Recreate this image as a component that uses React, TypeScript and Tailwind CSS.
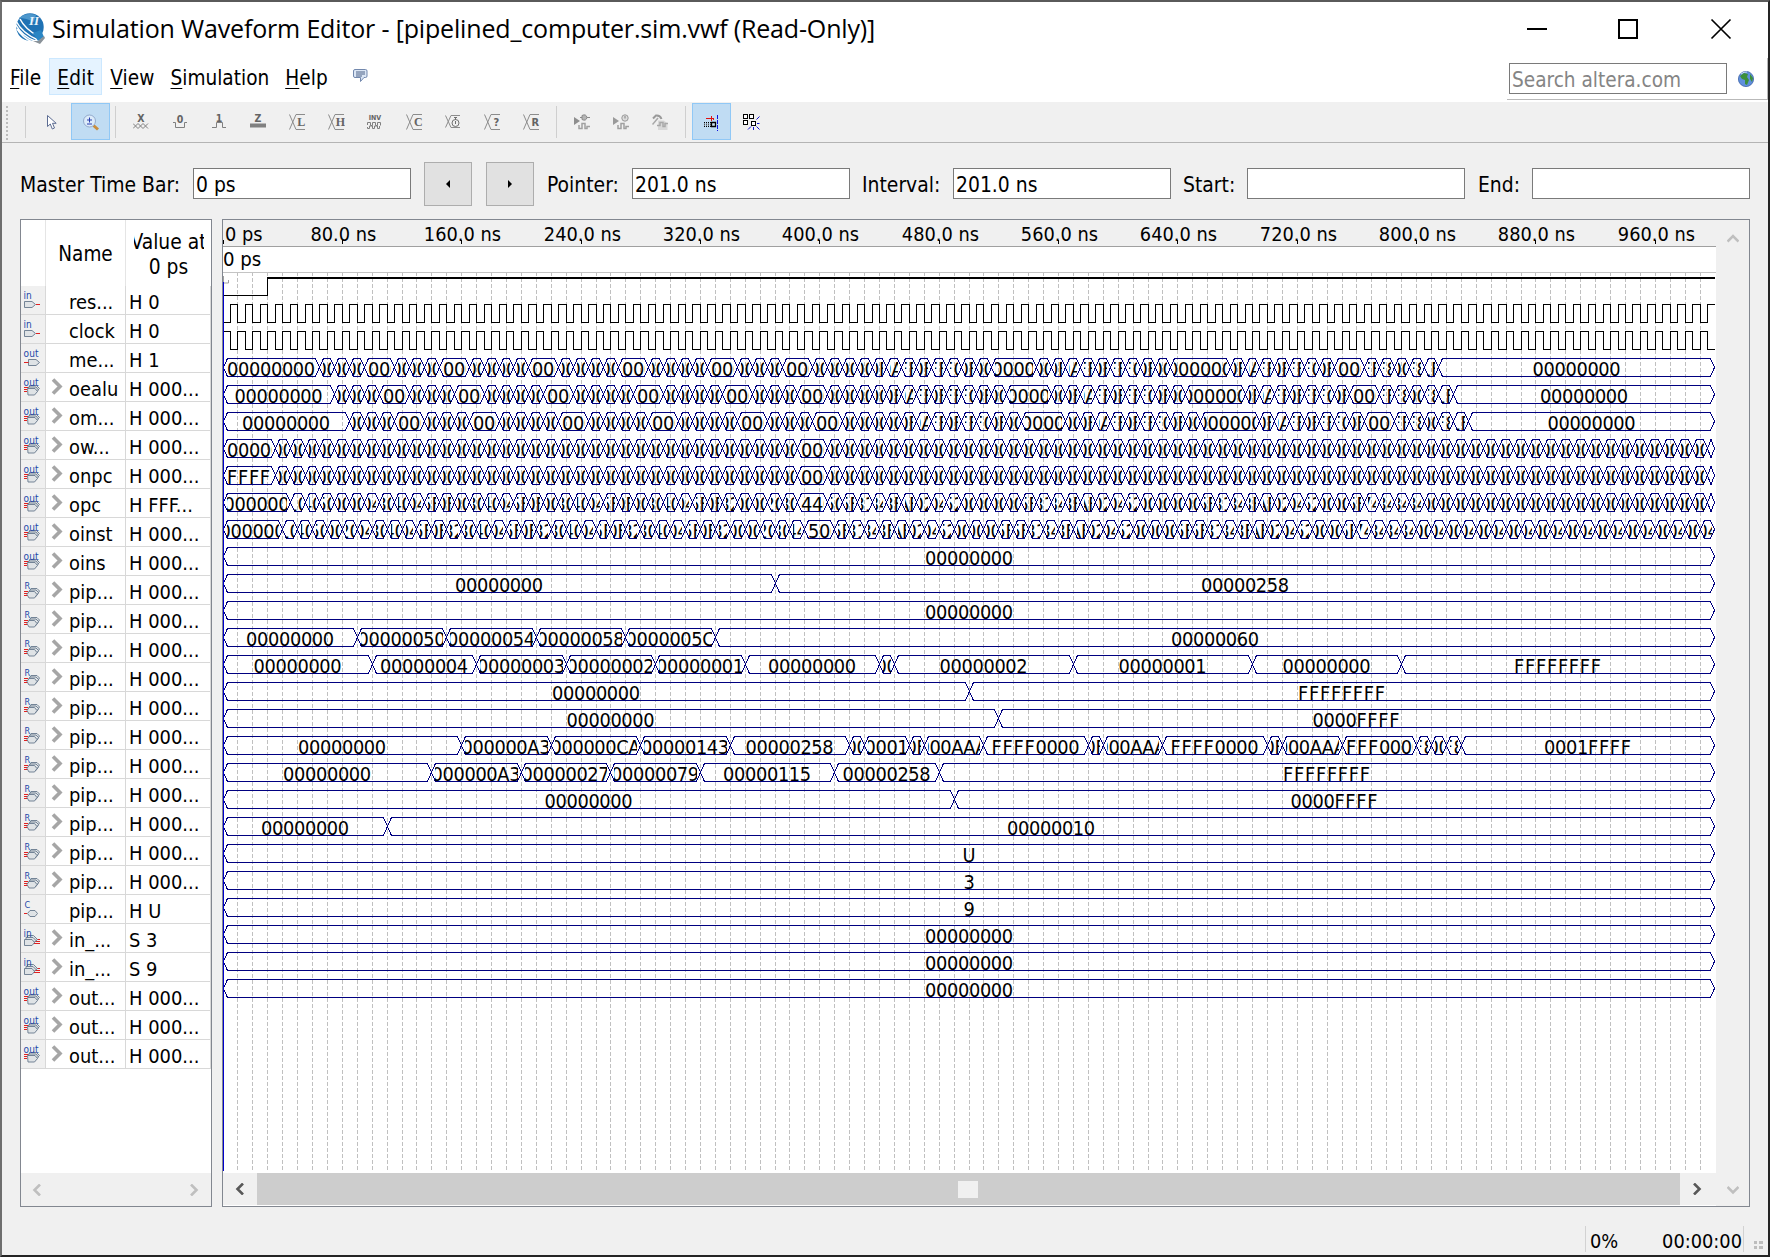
import React from "react";

const UI = "font-['DejaVu_Sans_Condensed','DejaVu_Sans',sans-serif] [font-stretch:condensed]";

/* ---------- waveform data ---------- */

type Seg = { from: number; to: number; text: string };

const END = 1000;
const PX_PER_NS = 1.492;
const toX = (t: number) => Math.floor(t * PX_PER_NS);

function segs(breaks: number[], texts: string[]): Seg[] {
  const edges = [0, ...breaks, END];
  return texts.map((text, i) => ({ from: edges[i], to: edges[i + 1], text }));
}

function range(from: number, to: number, skip: number[] = []) {
  const out: number[] = [];
  for (let t = from; t <= to; t += 10) if (!skip.includes(t)) out.push(t);
  return out;
}

const ZERO = "00000000";
const LOOP_CODES: Record<number, string> = {
  440: "0000FFFF", 450: "0000AAAA", 460: "FFFFFFFF", 470: "0000FFFF", 480: "FFFFFFFF", 490: "FFFF0000", 500: "0000FFFF",
  560: "0000FFFF", 570: "0000AAAA", 580: "FFFFFFFF", 590: "0000FFFF", 600: "FFFFFFFF", 610: "FFFF0000", 620: "0000FFFF",
  680: "0000FFFF", 690: "0000AAAA", 700: "FFFFFFFF", 710: "0000FFFF", 720: "FFFFFFFF", 730: "FFFF0000", 740: "0000FFFF",
  770: "FFFFFFFF", 780: "FFFF8000", 800: "FFFF8000", 810: "0001FFFF",
};

function stageRow(shift: number): Seg[] {
  const breaks = range(65, 815, [105, 155, 215, 275, 335, 385, 525, 535, 645, 655, 665, 755]);
  const edges = [0, ...breaks.map((b) => b + shift), END];
  return edges.slice(0, -1).map((from, i) => {
    const to = edges[i + 1];
    const mid = (from + to) / 2 - shift;
    return { from, to, text: to - from === 10 ? LOOP_CODES[mid] ?? ZERO : ZERO };
  });
}

function pairRow(breaks: number[], first: string, codes: string): Seg[] {
  const list = codes.split(" ");
  const edges = [0, ...breaks, END];
  return edges.slice(0, -1).map((from, i) => ({
    from,
    to: edges[i + 1],
    text: i === 0 ? first : "000" + (list[i - 1] ?? "00") + "000",
  }));
}

const PC_CODES =
  "10 40 50 00 00 04 30 40 04 5F 0F 00 30 40 04 5F 0F 00 30 40 04 5F 0F 00 30 40 04 5F 0F 32 00 00 20 30 44 50 5F 31 34 3F AF 02 04 52 00 00 00 00 5F 31 34 3F AF 02 04 52 00 00 00 00 5F 31 34 3F AF 02 04 52 00 00 5F 74 34 34 34";
const INST_CODES =
  "10 40 50 00 20 04 30 40 04 5F 0F 32 30 40 04 5F 0F 32 30 40 04 5F 0F 32 30 40 04 5F 0F 32 00 00 20 30 44 50 5F 31 34 3F AF 02 04 52 00 00 00 5F 5F 31 34 3F AF 02 04 52 00 00 00 5F 5F 31 34 3F AF 02 04 52 00 00 5F 74 34 34 34" +
  " 00 04".repeat(10);

const BUSES: Seg[][] = [
  stageRow(0),
  stageRow(10),
  stageRow(20),
  pairRow(range(35, 995, [395]), ZERO, "00"),
  pairRow(range(35, 995, [395]), "FFFFFFFF", "00"),
  pairRow(range(45, 995, [395]), ZERO, PC_CODES),
  pairRow(range(40, 990, [400]), ZERO, INST_CODES),
  segs([], [ZERO]),
  segs([370], [ZERO, "00000258"]),
  segs([], [ZERO]),
  segs([90, 150, 210, 270, 330], [ZERO, "00000050", "00000054", "00000058", "0000005C", "00000060"]),
  segs(
    [100, 170, 230, 290, 350, 440, 450, 570, 690, 790],
    [ZERO, "00000004", "00000003", "00000002", "00000001", ZERO, ZERO, "00000002", "00000001", ZERO, "FFFFFFFF"],
  ),
  segs([500], [ZERO, "FFFFFFFF"]),
  segs([520], [ZERO, "0000FFFF"]),
  segs(
    [160, 220, 280, 340, 420, 430, 460, 470, 510, 580, 590, 630, 700, 710, 750, 800, 810, 820, 830],
    [ZERO, "000000A3", "000000CA", "00000143", "00000258", ZERO, "00000100", "0000FFFF", "0000AAAA", "FFFF0000", "0000FFFF",
      "0000AAAA", "FFFF0000", "0000FFFF", "0000AAAA", "FFFF0000", "FFFF8000", ZERO, "FFFF8000", "0001FFFF"],
  ),
  segs([140, 200, 260, 320, 410, 480], [ZERO, "000000A3", "00000027", "00000079", "00000115", "00000258", "FFFFFFFF"]),
  segs([490], [ZERO, "0000FFFF"]),
  segs([110], [ZERO, "00000010"]),
  segs([], ["U"]),
  segs([], ["3"]),
  segs([], ["9"]),
  segs([], [ZERO]),
  segs([], [ZERO]),
  segs([], [ZERO]),
];

/* ---------- waveform drawing ---------- */

const pitch = (c: string) => (c === "A" || c === "C" ? 12 : c === "U" ? 13 : 10.95);

/* Lays hex digits out from the centre of a cell and keeps those inside it. */
function layout(text: string, width: number) {
  const total = text.split("").reduce((n, c) => n + pitch(c), 0);
  let x = (width - total) / 2 - 0.6;
  const xs: number[] = [];
  let chars = "";
  for (const c of text) {
    if (x + pitch(c) > 0.8 && x < width - 0.8) {
      xs.push(Math.round(x * 10) / 10);
      chars += c;
    }
    x += pitch(c);
  }
  return { chars, xs: xs.join(" ") };
}

function Bus({ row, top }: { row: Seg[]; top: number }) {
  let d = "";
  const mid = top + 9;
  const bot = top + 18;
  row.forEach((s) => {
    const a = toX(s.from) + 0.5;
    const b = (s.to === END ? 1491 : toX(s.to)) + 0.5;
    const k = Math.min(4, (b - a) / 2);
    d += `M${a} ${mid}L${a + k} ${top}H${b - k}L${b} ${mid}L${b - k} ${bot}H${a + k}Z`;
  });
  return (
    <g>
      <path d={d} fill="none" stroke="#000080" strokeWidth="1" shapeRendering="crispEdges" />
      {row.map((s, i) => {
        const a = toX(s.from) + 4;
        const b = toX(s.to) - 3;
        const w = b - a;
        if (w < 4) return null;
        const { chars, xs } = layout(s.text, w);
        return (
          <svg key={i} x={a} y={top} width={w} height={19} overflow="hidden">
            <text x={xs} y={17.2} fontSize="19.8" fill="#000">
              {chars}
            </text>
          </svg>
        );
      })}
    </g>
  );
}

function clockPath(high: number, low: number, startHigh: boolean) {
  let level = startHigh;
  let d = `M0 ${startHigh ? high : low}`;
  for (let t = 5; t <= END; t += 5) {
    d += `H${toX(t) + 0.5}`;
    level = !level;
    if (t < END) d += `V${level ? high : low}`;
  }
  return d;
}

function Waves() {
  return (
    <svg width="1492" height="899" viewBox="0 0 1492 899" className={`block ${UI}`}>
      <g stroke="#c0c0c0" strokeDasharray="4 2" shapeRendering="crispEdges">
        {range(10, 990).map((t) => (
          <path key={t} d={`M${toX(t) + 0.5} -1V898`} />
        ))}
      </g>
      <path d="M0.5 3v7h5v-3" stroke="#a0a0a0" fill="none" />
      <path d="M0 22.5H44.5V5" stroke="#000" fill="none" shapeRendering="crispEdges" />
      <path d="M44 5H1492" stroke="#000" strokeWidth="2" shapeRendering="crispEdges" />
      <path d={clockPath(31.5, 49.5, false)} stroke="#000" fill="none" shapeRendering="crispEdges" />
      <path d={clockPath(58.5, 76.5, true)} stroke="#000" fill="none" shapeRendering="crispEdges" />
      {BUSES.map((row, i) => (
        <Bus key={i} row={row} top={85.5 + 27 * i} />
      ))}
      <path d="M0.5 9V898" stroke="#0000cc" shapeRendering="crispEdges" />
    </svg>
  );
}

function Ruler() {
  return (
    <svg width="1492" height="26" viewBox="0 0 1492 26" className={`block bg-[#f0f0f0] ${UI}`}>
      <text x="2" y="20.5" fontSize="19.8">0 ps</text>
      <path d="M0.5 20v4" stroke="#000" />
      {Array.from({ length: 12 }, (_, i) => (i + 1) * 80).map((t) => (
        <g key={t}>
          <text x={toX(t) + 1.4} y="20.5" fontSize="19.8" textAnchor="middle">{`${t}.0 ns`}</text>
          <path d={`M${toX(t) + 0.5} 20v4`} stroke="#000" />
        </g>
      ))}
    </svg>
  );
}

/* ---------- signal list ---------- */

type Kind = "in" | "out" | "outBus" | "reg" | "comb" | "inBus";
const SIGNALS: [Kind, string, string][] = [
  ["in", "res...", "H 0"],
  ["in", "clock", "H 0"],
  ["out", "me...", "H 1"],
  ["outBus", "oealu", "H 000..."],
  ["outBus", "om...", "H 000..."],
  ["outBus", "ow...", "H 000..."],
  ["outBus", "onpc", "H 000..."],
  ["outBus", "opc", "H FFF..."],
  ["outBus", "oinst", "H 000..."],
  ["outBus", "oins", "H 000..."],
  ...Array.from({ length: 11 }, (): [Kind, string, string] => ["reg", "pip...", "H 000..."]),
  ["comb", "pip...", "H U"],
  ["inBus", "in_...", "S 3"],
  ["inBus", "in_...", "S 9"],
  ["outBus", "out...", "H 000..."],
  ["outBus", "out...", "H 000..."],
  ["outBus", "out...", "H 000..."],
];

function SignalIcon({ kind }: { kind: Kind }) {
  const label = { in: "in", inBus: "in", out: "out", outBus: "out", reg: "R", comb: "C" }[kind];
  const body = { stroke: "#66788c", strokeWidth: 0.9, fill: "#dfe3e6" };
  return (
    <svg width="24" height="28" viewBox="0 0 24 28" className="block">
      {kind === "in" && (
        <>
          <path d="M3.5 15.5h7.500l3.500 3-3.500 3h-7.500z" {...body} />
          <path d="M15 18.500h4" stroke="#e02020" />
        </>
      )}
      {kind === "out" && (
        <>
          <path d="M7.500 15.500h7.500l3.500 3-3.500 3h-7.500z" {...body} />
          <path d="M3 18.500h4.500" stroke="#e02020" />
        </>
      )}
      {kind === "outBus" && (
        <>
          <path d="M3 14.500h4M3 16.500h3M3 18.500h3" stroke="#e02020" />
          <path d="M8.500 12.500h7l3 3-3 3h-7z" {...body} />
          <path d="M7.500 14h7.500l2.500 3-3 3h-7z" {...body} />
          <path d="M6.500 15.500h7.500l2.500 3-3 3.500h-6.500z" {...body} />
        </>
      )}
      {kind === "inBus" && (
        <>
          <path d="M13 15.500h6M13 17.500h6M13 19.500h6" stroke="#e02020" />
          <path d="M6.500 11.500h6l4 4-4 3h-6z" {...body} />
          <path d="M5 13.500h7l3 3-3 3h-7z" {...body} />
          <path d="M3.500 15.500h7.500l2.500 3-2.500 3h-7.500z" {...body} />
        </>
      )}
      {kind === "reg" && (
        <>
          <path d="M3 15.500h4M3 17.500h4M3 19.500h4" stroke="#e02020" />
          <path d="M10 12.500h6l2.500 2.500-2.500 4h-6l-2-3z" {...body} />
          <path d="M9 14h6l2.500 2.500-2.500 4h-6l-2-3z" {...body} />
          <path d="M8 15.500h5.500l2.500 3-2.500 3.500h-5.500l-2-3.500z" {...body} />
        </>
      )}
      {kind === "comb" && (
        <>
          <path d="M3 18.500h3" stroke="#e02020" />
          <path d="M9 15.500h5l2.500 3-2.500 3h-5l-2.500-3z" {...body} />
        </>
      )}
      <text
        x={label.length === 1 ? 3.5 : 2.5}
        y="13"
        fontSize={label.length === 1 ? 9 : 10}
        fill="#2448a8"
        className="font-['DejaVu_Sans',sans-serif] [font-stretch:condensed]"
        textLength={label === "out" ? 15 : undefined}
      >
        {label}
      </text>
    </svg>
  );
}

function SignalPanel() {
  return (
    <div className="flex h-[988px] w-[192px] flex-col border border-[#828790] bg-white text-[19.9px]">
      <div className="flex h-[66px] text-black">
        <div className="w-[25px] border-r border-[#e5e5e5]" />
        <div className="flex w-[80px] items-center justify-center border-r border-[#e5e5e5] pt-[3px] text-[20.5px]">
          Name
        </div>
        <div className="flex w-[85px] items-center justify-center pt-[4px]">
          <div className="flex w-[70px] flex-col items-center overflow-hidden whitespace-nowrap leading-[25px] text-[20.8px]">
            <span>Value at</span>
            <span>0 ps</span>
          </div>
        </div>
      </div>
      {SIGNALS.map(([kind, name, value], i) => (
        <div key={i} className="flex h-[29px] shrink-0 whitespace-nowrap leading-[33px]">
          <div className="w-[25px] border-b border-r border-[#d8d8d8] bg-[#f0f0f0]">
            <SignalIcon kind={kind} />
          </div>
          <div className="flex w-[80px] border-b border-r border-[#d8d8d8]">
            <svg width="23" height="28" viewBox="0 0 23 28" className="shrink-0">
              {!["in", "out", "comb"].includes(kind) && (
                <path d="M7 6.500l7 7-7 7" fill="none" stroke="#a6a6a6" strokeWidth="3.600" />
              )}
            </svg>
            <span className="h-[28px]">{name}</span>
          </div>
          <div className="w-[85px] border-b border-r border-[#d8d8d8] pl-[3px]">{value}</div>
        </div>
      ))}
      <div className="mt-auto flex h-[33px] items-center justify-between bg-[#f0f0f0] pl-[10px] pr-[10px]">
        <Arrow dir="left" dim />
        <Arrow dir="right" dim />
      </div>
    </div>
  );
}

function Arrow({ dir, dim }: { dir: "left" | "right" | "up" | "down"; dim?: boolean }) {
  const d = {
    left: "M9 0.500L3.500 6L9 11.500",
    right: "M2 0.500L7.500 6L2 11.500",
    up: "M0.500 8.500L6 3L11.500 8.500",
    down: "M0.500 3L6 8.500L11.500 3",
  }[dir];
  return (
    <svg width="12" height="12" viewBox="0 0 12 12" className="block">
      <path d={d} fill="none" stroke={dim ? "#bfbfbf" : "#585858"} strokeWidth="2.600" />
    </svg>
  );
}

/* ---------- toolbar ---------- */

function ValueIcon({ letter, sans }: { letter: string; sans?: boolean }) {
  return (
    <>
      <path d="M0.500 0.500L7 15.500H16M0.500 15.500L7 0.500H16" stroke="#8c8c8c" fill="none" />
      <text
        x="12.300"
        y="12"
        fontSize={sans ? 11 : 12}
        fontWeight="bold"
        textAnchor="middle"
        fill="#646464"
        className={sans ? "font-['DejaVu_Sans',sans-serif]" : "font-['Liberation_Serif',serif]"}
      >
        {letter}
      </text>
    </>
  );
}

const TOP_TEXT = {
  fontSize: 10.5,
  fontWeight: "bold" as const,
  textAnchor: "middle" as const,
  fill: "#646464",
  className: "font-['DejaVu_Sans',sans-serif]",
};

const ICONS: Record<string, React.ReactNode> = {
  cursor: (
    <path d="M3.500 1.500v11l2.800-2.500 2 5 2.200-1-2-4.700h3.700z" fill="#fff" stroke="#5c6c92" strokeWidth="1" />
  ),
  zoom: (
    <>
      <path d="M10.500 11.500l4.500 4" stroke="#c98d3e" strokeWidth="3" />
      <circle cx="6.500" cy="7" r="6" fill="#dcebfa" stroke="#93aacb" />
      <path d="M4 6h5M6.500 3.500v5M4 10h5" stroke="#2a3fae" fill="none" />
    </>
  ),
  x: (
    <>
      <text x="8" y="7.700" {...TOP_TEXT}>X</text>
      <path d="M0 9.500l5 5 5-5 5 5M0 14.500l5-5 5 5 5-5" stroke="#808080" fill="none" />
    </>
  ),
  zero: (
    <>
      <text x="8" y="9" {...TOP_TEXT}>0</text>
      <path d="M1 8.500h2.500v5h9v-5H15" stroke="#808080" fill="none" />
    </>
  ),
  one: (
    <>
      <text x="8" y="7.700" {...TOP_TEXT}>1</text>
      <path d="M1 13.500h4.500v-5h6v5H15" stroke="#808080" fill="none" />
    </>
  ),
  z: (
    <>
      <text x="8" y="7.700" {...TOP_TEXT}>Z</text>
      <path d="M0 11.500h16" stroke="#808080" strokeWidth="4" />
    </>
  ),
  inv: (
    <>
      <text x="8" y="6" {...TOP_TEXT} fontSize="7">INV</text>
      <path d="M0.500 11v-2.500h3v3h2v-3h3v3h2v-3h3v3M0.500 13v1.500h2v-2.500h3v2.500h2v-2.500h3v2.500h2v-2.500" stroke="#808080" fill="none" />
    </>
  ),
  L: <ValueIcon letter="L" />,
  H: <ValueIcon letter="H" />,
  C: <ValueIcon letter="C" />,
  Q: <ValueIcon letter="?" sans />,
  R: <ValueIcon letter="R" sans />,
  T: (
    <>
      <path d="M0.500 1.500L6 13.500H15M0.500 13.500L6 1.500H15" stroke="#8c8c8c" fill="none" />
      <circle cx="10.500" cy="9" r="3.500" stroke="#707070" fill="#f0f0f0" />
      <path d="M10.500 7v3M10.500 3v3M9 3.500h3" stroke="#707070" />
    </>
  ),
  run1: (
    <>
      <path d="M0 3l6 4-6 4z" fill="#8e8e8e" />
      <path d="M6 3.500h2M8 1.500q4-2 5 2 -1 4-5 2zM13 3.500h3" stroke="#8a8a8a" fill="#b5b5b5" />
      <path d="M5 11v3.500h3v-5h3v5h2v-2h3" stroke="#a0a0a0" strokeWidth="1.500" fill="none" />
    </>
  ),
  run2: (
    <>
      <path d="M0 3l6 4-6 4z" fill="#9a9a9a" />
      <circle cx="12" cy="4" r="3.200" stroke="#9a9a9a" fill="#dcdcdc" />
      <path d="M12 2v2.500" stroke="#808080" />
      <path d="M5 11v3.500h3v-5h3v5h2v-2h3" stroke="#a0a0a0" strokeWidth="1.500" fill="none" />
    </>
  ),
  tool: (
    <>
      <path d="M1 4.500L4 1.500Q8 1 9.500 5" stroke="#9a9a9a" strokeWidth="2" fill="none" />
      <path d="M6 4L0.500 10.500" stroke="#a8a8a8" strokeWidth="1.500" />
      <path d="M6 6.500h6l3.500 3v6.500h-9.500z" fill="#d8d8d8" />
      <path d="M5 11.500h3v-3h3v4h2v-3h3" stroke="#a8a8a8" strokeWidth="1.500" fill="none" />
    </>
  ),
  snap: (
    <>
      <path d="M2 4.500h8M7.500 2v5M9 3.500v2" stroke="#e01010" fill="none" shapeRendering="crispEdges" />
      <path d="M0 8.500h7M0 12.500h7" stroke="#000" strokeDasharray="1 1" />
      <path d="M0 10.500h7" stroke="#555" strokeWidth="2" strokeDasharray="1 1" />
      <path d="M7.500 8.500h4v4h-4z" stroke="#000" strokeWidth="1.300" fill="#cfe4f5" />
      <path d="M13.500 1v16" stroke="#1010e0" strokeDasharray="4 1" />
    </>
  ),
  grid: (
    <>
      <path d="M0.500 0.500h4v4h-4zM6.500 0.500h4v4h-4zM0.500 6.500h4v4h-4zM8.500 7.500h4v4h-4z" stroke="#000" strokeWidth="1" fill="#fff" shapeRendering="crispEdges" />
      <path d="M13.500 5.500l3-3M14 9.500h2.500M13.500 12.500l3 3M10.500 13v3M8 12.500l-3 3" stroke="#1515d0" fill="none" />
    </>
  ),
};

function ToolButton({ icon, active }: { icon: string; active?: boolean }) {
  return (
    <div
      className={
        "flex h-[37px] w-[39px] items-center justify-center pl-[2px] pt-px " +
        (active ? "border border-[#90c8f6] bg-[#c0dcf3]" : "")
      }
    >
      <svg width="17" height="17" viewBox="0 0 17 17" className="block">
        {ICONS[icon]}
      </svg>
    </div>
  );
}

const Sep = ({ space }: { space: string }) => <div className={"h-[32px] w-px bg-[#cfcfcf] " + space} />;

function Toolbar() {
  return (
    <div className="flex h-[41px] items-start border-b border-[#b4b4b4] bg-[#f0f0f0] pt-[1px]">
      <svg width="17" height="37" viewBox="0 0 17 37" className="block">
        <path d="M5 3v34" stroke="#bcbcbc" strokeWidth="2" strokeDasharray="2 2" />
      </svg>
      <div className="flex items-center">
        <Sep space="mx-[6px]" />
        <ToolButton icon="cursor" />
        <ToolButton icon="zoom" active />
        <Sep space="mx-[5px]" />
        {["x", "zero", "one", "z", "L", "H", "inv", "C", "T", "Q", "R"].map((n) => (
          <ToolButton key={n} icon={n} />
        ))}
        <Sep space="ml-[6px] mr-[5px]" />
        {["run1", "run2", "tool"].map((n) => (
          <ToolButton key={n} icon={n} />
        ))}
        <Sep space="mx-[6px]" />
        <ToolButton icon="snap" active />
        <ToolButton icon="grid" />
      </div>
    </div>
  );
}

/* ---------- chrome ---------- */

function Logo() {
  return (
    <svg width="30" height="32" viewBox="0 0 30 32" className="block">
      <circle cx="14" cy="14" r="13.700" fill="#1f72b4" />
      <path d="M3 5Q10-1 20 2L18 9Q10 5 3 5z" fill="#4d97cc" />
      <path d="M0 8Q6 20 22 27M0 12Q6 23 19 28M1 16Q6 24 16 29M4 6Q9 16 22 23" stroke="#fff" strokeWidth="1.500" fill="none" />
      <text x="18" y="12" fontSize="13" fontStyle="italic" fontWeight="bold" textAnchor="middle" fill="#e9f3fb" className="font-['Liberation_Serif',serif]">
        II
      </text>
      <path d="M17 20l8-3 3 7-6 4z" fill="#2a86c4" />
      <path d="M17 28l5 0 6-5 1 2-5 6z" fill="#8a9299" />
    </svg>
  );
}

function TitleBar() {
  return (
    <div className="flex h-[56px] items-start bg-white">
      <div className="ml-[14px] mt-[11px]">
        <Logo />
      </div>
      <div className="ml-[6px] mt-[6px] whitespace-nowrap font-['Open_Sans',sans-serif] text-[25px] leading-[40px] tracking-[-0.16px] [font-stretch:normal]">
        Simulation Waveform Editor - [pipelined_computer.sim.vwf (Read-Only)]
      </div>
      <svg width="206" height="22" viewBox="0 0 206 22" className="ml-auto mr-[36px] mt-[16px] block shrink-0">
        <path d="M1 11h20" stroke="#000" strokeWidth="2" />
        <path d="M93 2h18v18h-18z" stroke="#000" strokeWidth="2" fill="none" />
        <path d="M185.500 1.500l19 19M204.500 1.500l-19 19" stroke="#000" strokeWidth="1.700" />
      </svg>
    </div>
  );
}

function MenuItem({ text, hot, track }: { text: string; hot?: boolean; track: string }) {
  return (
    <div
      className={
        "flex h-[37px] items-center border px-[7px] pt-[4px] " +
        (hot ? "border-[#cce8ff] bg-[#e5f3ff]" : "border-transparent")
      }
    >
      <span className={track}>
        <span className="underline decoration-1 underline-offset-[3px]">{text[0]}</span>
        {text.slice(1)}
      </span>
    </div>
  );
}

function MenuBar() {
  return (
    <div className="flex h-[44px] items-start bg-white">
      <div className="flex text-[20.6px]">
        <MenuItem text="File" track="tracking-[0.1px]" />
        <MenuItem text="Edit" track="tracking-[0.25px]" hot />
        <MenuItem text="View" track="tracking-[0.1px]" />
        <MenuItem text="Simulation" track="tracking-[0px]" />
        <MenuItem text="Help" track="tracking-[0.1px]" />
      </div>
      <svg width="15" height="14" viewBox="0 0 15 14" className="ml-[17px] mt-[11px] block">
        <path d="M2 0.500h10.500q1.500 0 1.500 1.500v5q0 1.500-1.500 1.500h-1.500l-3.500 4v-4h-5.500q-1.500 0-1.500-1.500v-5q0-1.500 1.500-1.500z" fill="#dbe6f5" stroke="#7288ad" />
        <path d="M3 3h9M3 5h9M3 7h6" stroke="#40557e" strokeWidth="0.900" />
      </svg>
      <div className="ml-auto flex h-[42px] w-[261px] items-start border-b border-r border-[#b9b9b9] pl-[2px] pt-[5px]">
        <div className="flex h-[31px] w-[218px] items-center border border-[#7a7a7a] pl-[2px] pt-[3px] text-[20.6px] text-[#858585]">
          Search altera.com
        </div>
        <svg width="16" height="16" viewBox="0 0 16 16" className="ml-[11px] mt-[8px] block">
          <circle cx="8" cy="8" r="7.600" fill="#5f8fdc" stroke="#3e62a8" strokeWidth="0.800" />
          <path d="M2 5l4-3 4 1-1 3 2 3-2 5-2-1v-4l-3-1z" fill="#3c8f3a" />
          <path d="M12 3l3 4-1 4-2-3z" fill="#3c8f3a" />
          <path d="M3 3q3-2.500 6-2" stroke="#cfe0f8" fill="none" />
        </svg>
      </div>
    </div>
  );
}

function Field({ label, labelW, value }: { label: string; labelW: string; value: string }) {
  return (
    <div className="flex items-center">
      <span className={"whitespace-nowrap pt-[3px] " + labelW}>{label}</span>
      <div className="flex h-[31px] w-[218px] items-center border border-[#7a7a7a] bg-white pl-[2px] pt-[3px]">{value}</div>
    </div>
  );
}

function StepButton({ dir }: { dir: "left" | "right" }) {
  return (
    <div className="flex h-[44px] w-[48px] items-center justify-center border border-[#adadad] bg-[#e1e1e1]">
      <svg width="6" height="8" viewBox="0 0 6 8" className="block">
        <path d={dir === "left" ? "M5 0v8L1 4z" : "M1 0v8l4-4z"} fill="#000" />
      </svg>
    </div>
  );
}

function TimeBar() {
  return (
    <div className="flex h-[76px] items-center pl-[18px] pt-[6px] text-[20.9px]">
      <Field label="Master Time Bar:" labelW="w-[173px]" value="0 ps" />
      <div className="ml-[13px] mr-[13px] flex gap-[14px]">
        <StepButton dir="left" />
        <StepButton dir="right" />
      </div>
      <Field label="Pointer:" labelW="w-[85px]" value="201.0 ns" />
      <div className="w-[12px]" />
      <Field label="Interval:" labelW="w-[91px]" value="201.0 ns" />
      <div className="w-[12px]" />
      <Field label="Start:" labelW="w-[64px]" value="" />
      <div className="w-[13px]" />
      <Field label="End:" labelW="w-[54px]" value="" />
    </div>
  );
}

function WavePanel() {
  return (
    <div className="flex h-[988px] w-[1528px] border border-[#828790] bg-[#f0f0f0]">
      <div className="flex w-[1493px] flex-col bg-white">
        <div className="border-b border-[#a0a0a0] bg-[#f0f0f0]">
          <Ruler />
        </div>
        <div className="h-[26px] border-b border-[#c4c4c4] text-[20.2px] leading-[25px]">0 ps</div>
        <div className="h-[900px] overflow-hidden">
          <Waves />
        </div>
        <div className="flex h-[32px] items-stretch bg-[#f0f0f0]">
          <div className="flex w-[34px] items-center justify-center">
            <Arrow dir="left" />
          </div>
          <div className="flex flex-1 items-center bg-[#cdcdcd] pl-[701px]">
            <div className="h-[17px] w-[20px] bg-[#f0f0f0]" />
          </div>
          <div className="flex w-[36px] items-center justify-center">
            <Arrow dir="right" />
          </div>
        </div>
      </div>
      <div className="flex flex-1 flex-col items-center justify-between pb-[10px] pt-[13px]">
        <Arrow dir="up" dim />
        <Arrow dir="down" dim />
      </div>
    </div>
  );
}

function StatusBar() {
  return (
    <div className="mt-auto flex h-[29px] items-start justify-end text-[19.8px] leading-[32px]">
      <div className="h-[26px] w-[159px] border-l border-r border-[#d2d2d2]">
        <div className="flex justify-between pl-[4px] pr-px">
          <span>0%</span>
          <span>00:00:00</span>
        </div>
      </div>
      <svg width="9" height="10" viewBox="0 0 9 10" className="ml-[10px] mr-[5px] mt-[14px] block">
        <path d="M0 1h3v3h-3zM5 1h4v3h-4zM0 6h3v3h-3zM5 6h4v3h-4z" fill="#bdbdbd" />
      </svg>
    </div>
  );
}

export default function App() {
  return (
    <div className={`h-[1257px] w-[1770px] overflow-hidden border-2 border-b-[#242424] border-l-[#6e6e6e] border-r-[#242424] border-t-[#5a5a5a] bg-[#f0f0f0] text-black ${UI}`}>
      <div className="flex h-full flex-col">
        <TitleBar />
        <MenuBar />
        <Toolbar />
        <TimeBar />
        <div className="flex gap-[10px] pl-[18px]">
          <SignalPanel />
          <WavePanel />
        </div>
        <StatusBar />
      </div>
    </div>
  );
}
